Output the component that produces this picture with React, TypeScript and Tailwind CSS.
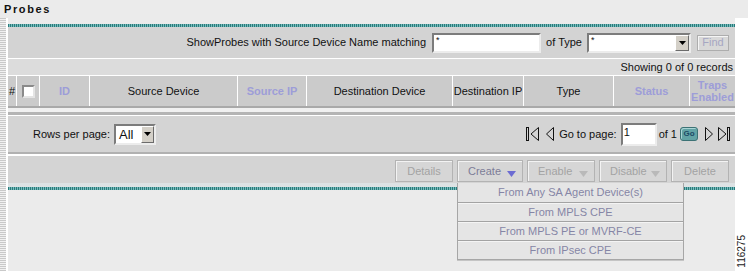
import type { ReactNode } from 'react'

const teal = 'h-[3px] bg-[repeating-linear-gradient(90deg,#2b7a7b_0_1px,#74bcbc_1px_2px)]'

function Sunken({ className, children }: { className: string; children?: ReactNode }) {
  return (
    <div
      className={`relative flex border-2 border-t-[#7c7c7c] border-l-[#7c7c7c] border-r-[#ececec] border-b-[#ececec] bg-white ${className}`}
    >
      {children}
    </div>
  )
}

function ArrowBox({ className }: { className: string }) {
  return (
    <div
      className={`absolute flex items-center justify-center border border-t-white border-l-white border-r-[#6b6b6b] border-b-[#6b6b6b] bg-[#d4d0c8] ${className}`}
    >
      <svg width="7" height="4" viewBox="0 0 7 4" aria-hidden>
        <path d="M0 0h7L3.5 4z" fill="#000" />
      </svg>
    </div>
  )
}

function ActionButton({ label, w, arrow }: { label: string; w: string; arrow?: 'blue' | 'gray' }) {
  return (
    <div
      className={`relative flex h-[22px] items-center border border-[#b3b3b3] bg-[#d6d6d6] shadow-[inset_1px_1px_0_#f3f3f3] ${w} ${
        arrow ? 'justify-start pl-[10px]' : 'justify-center'
      }`}
    >
      <span className={arrow === 'blue' ? 'text-[#7c7c96]' : 'text-[#a3a3a3]'}>{label}</span>
      {arrow && (
        <svg width="9" height="6" viewBox="0 0 9 6" className="absolute right-[6px] bottom-[4px]" aria-hidden>
          <path d="M0 0h9L4.5 6z" fill={arrow === 'blue' ? '#6b6bd2' : '#b9b9b9'} />
        </svg>
      )}
    </div>
  )
}

function PagerIcon({ dir, bar }: { dir: 'left' | 'right'; bar?: boolean }) {
  const tri = dir === 'left' ? 'M9.5 1.5 L2.5 8 L9.5 14.5 Z' : 'M1.5 1.5 L8.5 8 L1.5 14.5 Z'
  if (!bar) {
    return (
      <svg width="11" height="16" viewBox="0 0 11 16" aria-hidden>
        <path d={tri} fill="none" stroke="#111" strokeWidth="1" />
      </svg>
    )
  }
  return dir === 'left' ? (
    <svg width="14" height="16" viewBox="0 0 14 16" aria-hidden>
      <rect x="0.5" y="1.5" width="2" height="13" fill="none" stroke="#111" strokeWidth="1" />
      <path d="M12.5 1.5 L5 8 L12.5 14.5 Z" fill="none" stroke="#111" strokeWidth="1" />
    </svg>
  ) : (
    <svg width="14" height="16" viewBox="0 0 14 16" aria-hidden>
      <path d="M1.5 1.5 L9 8 L1.5 14.5 Z" fill="none" stroke="#111" strokeWidth="1" />
      <rect x="10.5" y="1.5" width="2" height="13" fill="none" stroke="#111" strokeWidth="1" />
    </svg>
  )
}

const columns: { label: ReactNode; w: string; link?: boolean }[] = [
  { label: 'ID', w: 'w-[50px]', link: true },
  { label: 'Source Device', w: 'w-[148px]' },
  { label: 'Source IP', w: 'w-[69px]', link: true },
  { label: 'Destination Device', w: 'w-[146px]' },
  { label: 'Destination IP', w: 'w-[71px]' },
  { label: 'Type', w: 'w-[90px]' },
  { label: 'Status', w: 'w-[76px]', link: true },
  { label: <>Traps<br />Enabled</>, w: 'w-[46px]', link: true },
]

const menuItems = ['From Any SA Agent Device(s)', 'From MPLS CPE', 'From MPLS PE or MVRF-CE', 'From IPsec CPE']

export default function App() {
  return (
    <div className="relative flex h-[271px] w-[748px] flex-col overflow-hidden bg-[#ebebeb] font-['Liberation_Sans',Arial,sans-serif] text-[11px] text-[#111]">
      {/* Title */}
      <div className="h-[18px] shrink-0 pl-[4px] pt-[2px] text-[11px] font-bold leading-[14px] tracking-[1.6px]">
        Probes
      </div>

      <div className="flex flex-1">
        {/* left dotted rule */}
        <div className="w-[6px] bg-[repeating-linear-gradient(180deg,#c9c9c9_0_1px,#f1f1f1_1px_2px)]" />
        <div className="w-[2px] bg-white" />

        {/* Panel */}
        <div className="flex w-[727px] flex-col">
          <div className="h-[6px]" />
          <div className={teal} />

          {/* Filter row */}
          <div className="flex h-[31px] items-center justify-end bg-[#d3d3d3] pr-[6px]">
            <span className="mr-[6px]">ShowProbes with Source Device Name matching</span>
            <Sunken className="h-[20px] w-[109px]">
              <span className="pl-[2px] pt-[1px] text-[9px] leading-none">*</span>
            </Sunken>
            <span className="mx-[5px]">of Type</span>
            <Sunken className="h-[20px] w-[104px]">
              <span className="pl-[2px] pt-[1px] text-[9px] leading-none">*</span>
              <ArrowBox className="right-0 top-0 h-[16px] w-[14px]" />
            </Sunken>
            <div className="ml-[6px] flex h-[16px] w-[32px] items-center justify-center border border-[#adadad] bg-[#d8d8d8] text-[#a6a6c2] shadow-[inset_1px_1px_0_#f5f5f5]">
              Find
            </div>
          </div>
          <div className="h-px bg-white" />

          {/* Showing */}
          <div className="flex h-[16px] items-center justify-end bg-[#dcdcdc] pr-[2px]">
            Showing 0 of 0 records
          </div>
          <div className="h-px bg-white" />

          {/* Header */}
          <div className="flex h-[30px] bg-[#cbcbcb]">
            <div className="flex w-[8px] items-center justify-center">#</div>
            <div className="flex w-[23px] items-center justify-center border-l border-white">
              <div className="h-[13px] w-[13px] border-2 border-t-[#8a8a8a] border-l-[#8a8a8a] border-r-[#e4e4e4] border-b-[#e4e4e4] bg-white" />
            </div>
            {columns.map((c, i) => (
              <div
                key={i}
                className={`flex items-center justify-center border-l border-white text-center leading-[12px] ${c.w} ${
                  c.link ? 'font-bold text-[#9d9dd8]' : ''
                }`}
              >
                {c.label}
              </div>
            ))}
          </div>
          <div className="h-[2px] bg-[#a9a9a9]" />
          <div className="h-[4px] bg-[#f0f0f0]" />
          <div className="h-[3px] bg-[#b4b4b4]" />
          <div className="h-px bg-white" />

          {/* Pager row */}
          <div className="flex h-[36px] items-center justify-between bg-[#d4d4d4] pl-[25px] pr-[4px]">
            <div className="flex items-center">
              <span className="mr-[4px]">Rows per page:</span>
              <Sunken className="h-[21px] w-[42px] items-center">
                <span className="pl-[3px] text-[13px] leading-none">All</span>
                <ArrowBox className="right-0 top-0 h-[17px] w-[13px]" />
              </Sunken>
            </div>
            <div className="flex items-center">
              <PagerIcon dir="left" bar />
              <div className="w-[4px]" />
              <PagerIcon dir="left" />
              <span className="ml-[4px] mr-[4px]">Go to page:</span>
              <Sunken className="h-[23px] w-[36px]">
                <span className="pl-[1px] pt-[2px] text-[11px] leading-none">1</span>
              </Sunken>
              <span className="ml-[2px] mr-[3px]">of 1</span>
              <div className="flex h-[14px] w-[18px] items-center justify-center rounded-[3px] border border-[#3c7275] bg-[#62a3a5] text-[8px] font-bold leading-none text-[#1c4a66] shadow-[inset_1px_1px_0_#a9d4d5]">
                Go
              </div>
              <div className="w-[6px]" />
              <PagerIcon dir="right" />
              <div className="w-[2px]" />
              <PagerIcon dir="right" bar />
            </div>
          </div>
          <div className="h-[2px] bg-[#b1b1b1]" />
          <div className="h-[2px] bg-white" />

          {/* Actions */}
          <div className="flex h-[27px] items-start justify-end gap-[4px] bg-[#d4d4d4] pr-[6px] pt-[4px]">
            <ActionButton label="Details" w="w-[58px]" />
            <ActionButton label="Create" w="w-[66px]" arrow="blue" />
            <ActionButton label="Enable" w="w-[68px]" arrow="gray" />
            <ActionButton label="Disable" w="w-[68px]" arrow="gray" />
            <ActionButton label="Delete" w="w-[58px]" />
          </div>
          <div className="h-[4px] bg-[#dde2e4]" />
          <div className={teal} />
        </div>

        {/* Right margin with figure id */}
        <div className="flex w-[13px] flex-col items-center justify-end bg-white pb-[3px]">
          <span className="rotate-180 text-[10px] leading-none text-[#222] [writing-mode:vertical-rl]">116275</span>
        </div>
      </div>

      {/* Create dropdown menu */}
      <div className="absolute left-[457px] top-[183px] flex w-[227px] flex-col border-x border-b border-[#a6a6a6] bg-[#e5e5e5] shadow-[0_1px_0_#c4c4c4]">
        {menuItems.map((m, i) => (
          <div
            key={m}
            className={`flex h-[19px] items-center justify-center text-[#8585a6] ${
              i > 0 ? 'border-t border-[#a3a3a3] shadow-[inset_0_1px_0_#f4f4f4]' : ''
            }`}
          >
            {m}
          </div>
        ))}
      </div>
    </div>
  )
}
